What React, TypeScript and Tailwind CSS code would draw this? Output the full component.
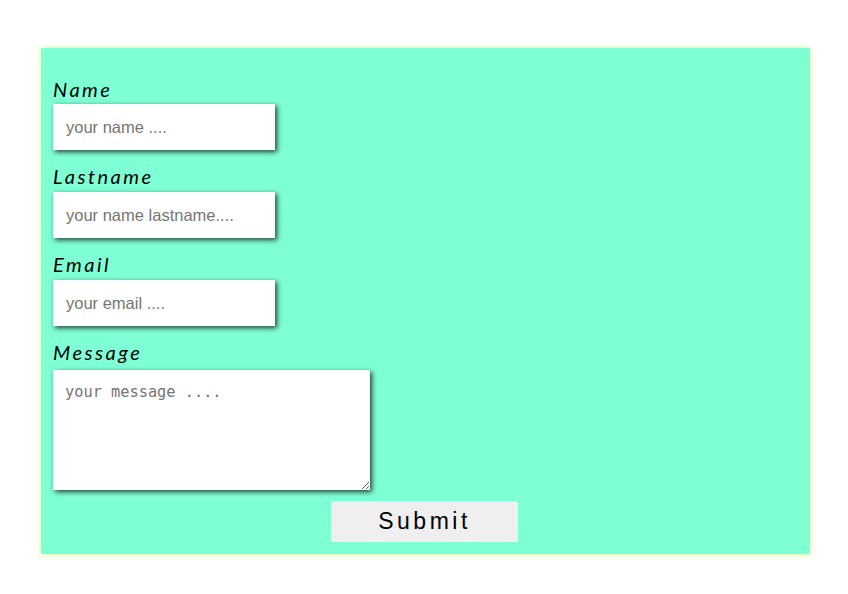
import React from "react";

const labelCls =
  "block text-[20px] leading-[24px] italic tracking-[2.5px] text-black font-['Lato','Open_Sans',sans-serif]";
const inputCls =
  "block w-[222px] h-[46px] bg-white px-[13px] pt-[1px] text-[16.5px] font-['Liberation_Sans',Arial,sans-serif] text-black placeholder:text-[#757575] outline-none shadow-[2px_2px_5px_rgba(0,0,0,0.75)]";

export default function App() {
  return (
    <div className="w-[848px] h-[594px] bg-white pt-[48px] pl-[41px]">
      <form className="w-[769px] h-[506px] bg-[#7fffd4] shadow-[0_0_5px_#c8ff80] pt-[29px] pl-[12px] flex flex-col">
        <label className={labelCls}>Name</label>
        <input className={`${inputCls} mt-[3px]`} placeholder="your name ...." />
        <label className={`${labelCls} mt-[14px]`}>Lastname</label>
        <input className={`${inputCls} mt-[4px]`} placeholder="your name lastname...." />
        <label className={`${labelCls} mt-[14px]`}>Email</label>
        <input className={`${inputCls} mt-[4px]`} placeholder="your email ...." />
        <label className={`${labelCls} mt-[14px]`}>Message</label>
        <textarea
          className="block w-[317px] h-[120px] mt-[6px] bg-white px-[12px] pt-[14px] text-[15.3px] leading-[17px] font-['DejaVu_Sans_Mono',monospace] placeholder:text-[#757575] outline-none shadow-[2px_2px_5px_rgba(0,0,0,0.75)] resize"
          placeholder="your message ...."
        />
        <div className="flex pl-[278px] mt-[11px]">
          <button
            type="button"
            className="w-[187px] h-[41px] bg-[#efefef] text-[23px] tracking-[3.5px] text-black font-['Liberation_Sans',Arial,sans-serif]"
          >
            Submit
          </button>
        </div>
      </form>
    </div>
  );
}
